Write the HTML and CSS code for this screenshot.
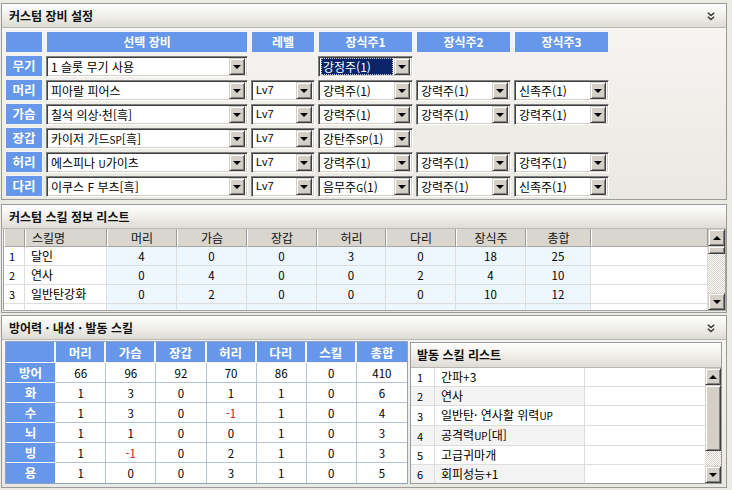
FILE: index.html
```html
<!DOCTYPE html>
<html lang="ko">
<head>
<meta charset="utf-8">
<title>커스텀 장비 설정</title>
<link rel="stylesheet" href="styles.css">
</head>
<body>
<div class="page">

  <section class="panel p-equip">
    <header class="phead">
      <h2>커스텀 장비 설정</h2>
      <svg class="chev" viewBox="0 0 8 9" width="8" height="9"><polyline points="0.8,0.8 4,3.6 7.2,0.8" /><polyline points="0.8,4.8 4,7.6 7.2,4.8" /></svg>
    </header>
    <div class="equip">
      <div class="eh"></div><div class="eh">선택 장비</div><div class="eh">레벨</div><div class="eh">장식주1</div><div class="eh">장식주2</div><div class="eh">장식주3</div>

      <div class="lab">무기</div>
      <div class="combo"><span class="ct">1 슬롯 무기 사용</span><span class="cb"></span></div>
      <div></div>
      <div class="combo focus"><span class="ct">강정주(1)</span><span class="cb"></span></div>
      <div></div><div></div>

      <div class="lab">머리</div>
      <div class="combo"><span class="ct">피아랄 피어스</span><span class="cb"></span></div>
      <div class="combo lv"><span class="ct">Lv7</span><span class="cb"></span></div>
      <div class="combo"><span class="ct">강력주(1)</span><span class="cb"></span></div>
      <div class="combo"><span class="ct">강력주(1)</span><span class="cb"></span></div>
      <div class="combo"><span class="ct">신족주(1)</span><span class="cb"></span></div>

      <div class="lab">가슴</div>
      <div class="combo"><span class="ct">칠석 의상·천[흑]</span><span class="cb"></span></div>
      <div class="combo lv"><span class="ct">Lv7</span><span class="cb"></span></div>
      <div class="combo"><span class="ct">강력주(1)</span><span class="cb"></span></div>
      <div class="combo"><span class="ct">강력주(1)</span><span class="cb"></span></div>
      <div class="combo"><span class="ct">강력주(1)</span><span class="cb"></span></div>

      <div class="lab">장갑</div>
      <div class="combo"><span class="ct">카이저 가드<small>SP</small>[흑]</span><span class="cb"></span></div>
      <div class="combo lv"><span class="ct">Lv7</span><span class="cb"></span></div>
      <div class="combo"><span class="ct">강탄주<small>SP</small>(1)</span><span class="cb"></span></div>
      <div></div><div></div>

      <div class="lab">허리</div>
      <div class="combo"><span class="ct">에스피나 <small>U</small>가이츠</span><span class="cb"></span></div>
      <div class="combo lv"><span class="ct">Lv7</span><span class="cb"></span></div>
      <div class="combo"><span class="ct">강력주(1)</span><span class="cb"></span></div>
      <div class="combo"><span class="ct">강력주(1)</span><span class="cb"></span></div>
      <div class="combo"><span class="ct">강력주(1)</span><span class="cb"></span></div>

      <div class="lab">다리</div>
      <div class="combo"><span class="ct">이쿠스 F 부츠[흑]</span><span class="cb"></span></div>
      <div class="combo lv"><span class="ct">Lv7</span><span class="cb"></span></div>
      <div class="combo"><span class="ct">음무주<small>G</small>(1)</span><span class="cb"></span></div>
      <div class="combo"><span class="ct">강력주(1)</span><span class="cb"></span></div>
      <div class="combo"><span class="ct">신족주(1)</span><span class="cb"></span></div>
    </div>
  </section>

  <section class="panel p-skill">
    <header class="phead"><h2>커스텀 스킬 정보 리스트</h2></header>
    <div class="slist">
      <div class="swrap">
        <table class="stable">
          <colgroup><col class="c-no"><col class="c-name"><col class="c70"><col class="c70"><col class="c70"><col class="c69"><col class="c70"><col class="c70"><col class="c65"><col></colgroup>
          <thead><tr><th></th><th class="tl">스킬명</th><th>머리</th><th>가슴</th><th>장갑</th><th>허리</th><th>다리</th><th>장식주</th><th>총합</th><th></th></tr></thead>
          <tbody>
            <tr><td class="no">1</td><td class="nm">달인</td><td class="v">4</td><td class="v">0</td><td class="v">0</td><td class="v">3</td><td class="v">0</td><td class="v">18</td><td class="v">25</td><td></td></tr>
            <tr><td class="no">2</td><td class="nm">연사</td><td class="v">0</td><td class="v">4</td><td class="v">0</td><td class="v">0</td><td class="v">2</td><td class="v">4</td><td class="v">10</td><td></td></tr>
            <tr><td class="no">3</td><td class="nm">일반탄강화</td><td class="v">0</td><td class="v">2</td><td class="v">0</td><td class="v">0</td><td class="v">0</td><td class="v">10</td><td class="v">12</td><td></td></tr>
            <tr><td class="no"></td><td class="nm"></td><td class="v"></td><td class="v"></td><td class="v"></td><td class="v"></td><td class="v"></td><td class="v"></td><td class="v"></td><td></td></tr>
          </tbody>
        </table>
      </div>
      <div class="vs">
        <span class="sb up"></span>
        <span class="thumb t-small"></span>
        <span class="track"></span>
        <span class="sb down"></span>
      </div>
    </div>
  </section>

  <section class="panel p-def">
    <header class="phead">
      <h2>방어력 · 내성 · 발동 스킬</h2>
      <svg class="chev" viewBox="0 0 8 9" width="8" height="9"><polyline points="0.8,0.8 4,3.6 7.2,0.8" /><polyline points="0.8,4.8 4,7.6 7.2,4.8" /></svg>
    </header>
    <div class="defbody">
      <table class="dtable">
        <thead><tr><th></th><th>머리</th><th>가슴</th><th>장갑</th><th>허리</th><th>다리</th><th>스킬</th><th>총합</th></tr></thead>
        <tbody>
          <tr><th>방어</th><td>66</td><td>96</td><td>92</td><td>70</td><td>86</td><td>0</td><td>410</td></tr>
          <tr><th>화</th><td>1</td><td>3</td><td>0</td><td>1</td><td>1</td><td>0</td><td>6</td></tr>
          <tr><th>수</th><td>1</td><td>3</td><td>0</td><td class="neg">-1</td><td>1</td><td>0</td><td>4</td></tr>
          <tr><th>뇌</th><td>1</td><td>1</td><td>0</td><td>0</td><td>1</td><td>0</td><td>3</td></tr>
          <tr><th>빙</th><td>1</td><td class="neg">-1</td><td>0</td><td>2</td><td>1</td><td>0</td><td>3</td></tr>
          <tr><th>용</th><td>1</td><td>0</td><td>0</td><td>3</td><td>1</td><td>0</td><td>5</td></tr>
        </tbody>
      </table>

      <div class="abox">
        <div class="ahead">발동 스킬 리스트</div>
        <div class="alist">
          <div class="awrap">
            <table class="atable">
              <colgroup><col class="a-no"><col class="a-name"><col></colgroup>
              <tbody>
                <tr><td class="no">1</td><td class="nm">간파+3</td><td></td></tr>
                <tr class="alt"><td class="no">2</td><td class="nm">연사</td><td></td></tr>
                <tr><td class="no">3</td><td class="nm">일반탄· 연사활 위력<small>UP</small></td><td></td></tr>
                <tr class="alt"><td class="no">4</td><td class="nm">공격력<small>UP</small>[대]</td><td></td></tr>
                <tr><td class="no">5</td><td class="nm">고급귀마개</td><td></td></tr>
                <tr class="alt"><td class="no">6</td><td class="nm">회피성능+1</td><td></td></tr>
                <tr><td class="no"></td><td class="nm"></td><td></td></tr>
              </tbody>
            </table>
          </div>
          <div class="vs vs2">
            <span class="sb up"></span>
            <span class="thumb t-big"></span>
            <span class="track"></span>
            <span class="sb down"></span>
          </div>
        </div>
      </div>
    </div>
  </section>

</div>
</body>
</html>
```
FILE: styles.css
```css
* { box-sizing: border-box; }
html, body { margin: 0; padding: 0; }
body {
  width: 732px;
  height: 490px;
  overflow: hidden;
  background: #ebeae5;
  font-family: "Noto Sans CJK KR", "Noto Sans", sans-serif;
  font-size: 12px;
  color: #000;
}
small { font-size: 10px; }

.page {
  width: 726px;
  margin-left: 1px;
  padding-top: 3px;
}

/* ---------- panels ---------- */
.panel {
  border: 1px solid #9b9b9b;
  background: linear-gradient(to bottom, #f7f6f3, #e9e8e2);
  display: flex;
  flex-direction: column;
  overflow: hidden;
}
.p-equip { height: 197px; }
.p-skill { height: 109px; margin-top: 4px; }
.p-def { height: 173px; margin-top: 2px; }

.phead {
  flex: none;
  height: 24px;
  border-bottom: 1px solid #b9b8b2;
  background: linear-gradient(to bottom, #fefefe, #f2f1ed 45%, #dcdbd4);
  display: flex;
  align-items: center;
  padding: 0 11px 0 7px;
}
.phead h2 {
  margin: 0;
  flex: 1;
  font-size: 12px;
  font-weight: bold;
  line-height: 14px;
  color: #111;
}
.chev { flex: none; margin-top: 1px; }
.chev polyline { fill: none; stroke: #333; stroke-width: 1.4; }

/* ---------- equipment grid ---------- */
.equip {
  display: grid;
  grid-template-columns: 38px 202px 64px 95px 95px 95px;
  grid-auto-rows: 22px;
  column-gap: 3px;
  row-gap: 2px;
  padding: 3px 0 0 3px;
}
.eh, .lab {
  background: #6797ea;
  border: 1px solid #f3f5fb;
  color: #fff;
  font-weight: bold;
  text-align: center;
  line-height: 19px;
  font-size: 12px;
}
.lab { font-size: 12.5px; }

.combo {
  align-self: center;
  height: 21px;
  display: flex;
  align-items: center;
  background: #fff;
  border: 1px solid;
  border-color: #808080 #ffffff #ffffff #808080;
  box-shadow: inset 1px 1px #404040, inset -1px -1px #d4d0c8;
  padding: 1px 2px 1px 2px;
}
.ct {
  flex: 1;
  padding-left: 2px;
  white-space: nowrap;
  overflow: hidden;
  line-height: 17px;
  height: 17px;
}
.lv .ct { font-family: "Liberation Sans", sans-serif; font-size: 11px; }
.focus .ct {
  background: #0a246a;
  color: #fff;
  outline: 1px dotted #c9c9c9;
  outline-offset: -1px;
  margin-right: 1px;
}
.cb {
  flex: none;
  width: 16px;
  height: 17px;
  background: #d4d0c8;
  border: 1px solid;
  border-color: #d4d0c8 #404040 #404040 #d4d0c8;
  box-shadow: inset 1px 1px #ffffff, inset -1px -1px #808080;
  display: flex;
  align-items: center;
  justify-content: center;
}
.cb::after,
.sb.down::after {
  content: "";
  border-left: 4px solid transparent;
  border-right: 4px solid transparent;
  border-top: 4px solid #000;
  margin-top: 1px;
}

/* ---------- scrollbars ---------- */
.vs {
  flex: none;
  width: 17px;
  display: flex;
  flex-direction: column;
}
.sb, .thumb {
  flex: none;
  height: 17px;
  background: #d4d0c8;
  border: 1px solid;
  border-color: #d4d0c8 #404040 #404040 #d4d0c8;
  box-shadow: inset 1px 1px #ffffff, inset -1px -1px #808080;
  display: flex;
  align-items: center;
  justify-content: center;
}
.sb.up::after {
  content: "";
  border-left: 4px solid transparent;
  border-right: 4px solid transparent;
  border-bottom: 4px solid #000;
}
.track {
  flex: 1;
  background: repeating-conic-gradient(#ffffff 0 25%, #d4d0c8 0 50%) 0 0 / 2px 2px;
}
.t-small { height: 8px; }
.t-big { height: 66px; }

/* ---------- skill list ---------- */
.slist {
  flex: 1;
  margin: 0 0 1px 1px;
  display: flex;
  border: 1px solid #a5a5a5;
  border-top: none;
  background: #fff;
  overflow: hidden;
}
.swrap { flex: 1; overflow: hidden; }
.stable, .atable {
  width: 100%;
  table-layout: fixed;
  border-collapse: separate;
  border-spacing: 0;
}
.c-no { width: 21px; }
.c-name { width: 82px; }
.c70 { width: 70px; }
.c69 { width: 69px; }
.c65 { width: 65px; }
.stable th {
  height: 18px;
  padding: 0;
  background: #d8d6cf;
  font-weight: normal;
  font-size: 12px;
  color: #111;
  text-align: center;
  line-height: 16px;
  border-left: 1px solid #ffffff;
  border-right: 1px solid #9d9b95;
  border-bottom: 1px solid #a8a6a0;
}
.stable th.tl { text-align: left; padding-left: 6px; }
.stable td {
  height: 19px;
  padding: 0;
  line-height: 18px;
  border-right: 1px solid #dedede;
  border-bottom: 1px solid #dedede;
  white-space: nowrap;
  overflow: hidden;
}
.stable td.no { padding-left: 5px; font-size: 11px; }
.stable td.nm { padding-left: 6px; }
.stable td.v { background: #eef6fe; text-align: center; font-size: 11.5px; }

/* ---------- defense / resist ---------- */
.defbody {
  flex: 1;
  display: flex;
  align-items: flex-start;
  gap: 2px;
  padding: 1px 0 0 3px;
}
.dtable {
  flex: none;
  width: 403px;
  border-collapse: separate;
  border-spacing: 0;
  border: 1px solid #8ea3c4;
  background: #fff;
  table-layout: fixed;
}
.dtable th {
  width: 50px;
  padding: 0;
  background: #6797ea;
  color: #fff;
  font-weight: bold;
  font-size: 12.5px;
  text-align: center;
}
.dtable thead th {
  height: 21px;
  line-height: 19px;
  border-right: 2px solid #f4f6fb;
  border-bottom: 1px solid #f4f6fb;
}
.dtable thead th:last-child { border-right: none; }
.dtable tbody th {
  height: 20px;
  line-height: 18px;
  border-right: 1px solid #f4f6fb;
  border-bottom: 1px solid #f4f6fb;
}
.dtable tbody tr:last-child th,
.dtable tbody tr:last-child td { border-bottom: none; }
.dtable td {
  padding: 0;
  height: 20px;
  line-height: 18px;
  text-align: center;
  font-size: 11.5px;
  border-right: 1px solid #b7c2d4;
  border-bottom: 1px solid #b7c2d4;
}
.dtable td:last-child { border-right: none; }
.dtable td.neg { color: #c8141e; }

/* ---------- active skill list ---------- */
.abox {
  flex: none;
  width: 312px;
  height: 142px;
  margin-top: 1px;
  border: 1px solid #9b9b9b;
  background: #fff;
  display: flex;
  flex-direction: column;
  overflow: hidden;
}
.ahead {
  flex: none;
  height: 25px;
  padding-left: 6px;
  line-height: 24px;
  font-weight: bold;
  font-size: 12px;
  color: #111;
  border-bottom: 1px solid #b9b8b2;
  background: linear-gradient(to bottom, #fefefe, #f2f1ed 45%, #dcdbd4);
}
.alist { flex: 1; display: flex; overflow: hidden; }
.awrap { flex: 1; overflow: hidden; }
.vs2 { width: 16px; }
.a-no { width: 24px; }
.a-name { width: 150px; }
.atable td {
  height: 19px;
  padding: 0;
  line-height: 18px;
  border-right: 1px solid #dddddd;
  border-bottom: 1px solid #dddddd;
  white-space: nowrap;
  overflow: hidden;
}
.atable td:last-child { border-right: none; }
.atable td.no { padding-left: 6px; font-size: 11px; }
.atable td.nm { padding-left: 6px; }
.atable tr.alt td.no,
.atable tr.alt td.nm { background: #f3f3f3; }
```
